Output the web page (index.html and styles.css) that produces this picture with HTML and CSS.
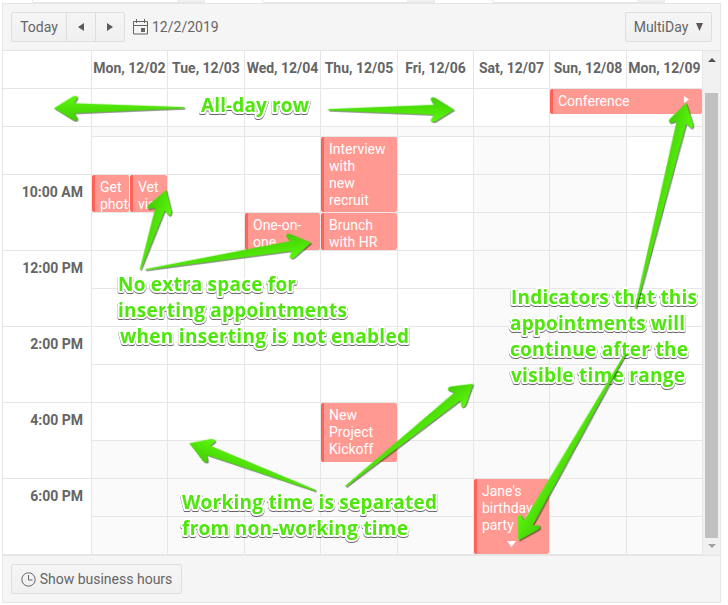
FILE: index.html
```html
<!DOCTYPE html>
<html lang="en">
<head>
<meta charset="utf-8">
<title>Scheduler</title>
<link rel="stylesheet" href="styles.css">
</head>
<body>
<div class="page">
  <div class="fields"><div class="field"></div><div class="field"></div><div class="field"></div></div>
  <div class="scheduler">
    <header class="toolbar">
      <div class="group">
        <button class="today">Today</button>
        <button class="nav"><svg width="6" height="8" viewBox="0 0 6 8"><path d="M6 0v8L0 4z"/></svg></button>
        <button class="nav"><svg width="6" height="8" viewBox="0 0 6 8"><path d="M0 0v8l6-4z"/></svg></button>
      </div>
      <svg class="calendar" width="15" height="16" viewBox="0 0 15 16"><path d="M.5 2.5h14v12.500h-14zM.5 6.500h14M3.500 0v4M11.500 0v4" fill="none" stroke="#656565"/><path d="M8 9h4v4H8z" fill="#656565"/></svg>
      <span class="date">12/2/2019</span>
      <button class="view">MultiDay <svg width="7" height="8" viewBox="0 0 7 8"><path d="M0 0h7L3.500 8z"/></svg></button>
    </header>
    <div class="content">
      <div class="table">
        <div class="row head"><div></div><div>Mon, 12/02</div><div>Tue, 12/03</div><div>Wed, 12/04</div><div>Thu, 12/05</div><div>Fri, 12/06</div><div>Sat, 12/07</div><div>Sun, 12/08</div><div>Mon, 12/09</div></div>
        <div class="row allday"><div></div><div></div><div></div><div></div><div></div><div></div><div></div>
          <div class="host"><div class="event conference">Conference<svg class="next" width="5" height="7" viewBox="0 0 5 7"><path d="M0 0v7l5-3.500z"/></svg></div></div><div></div></div>
        <div class="row body">
          <div class="times"><div></div><div>10:00 AM</div><div>12:00 PM</div><div>2:00 PM</div><div>4:00 PM</div><div>6:00 PM</div></div>
          <div class="day"><div class="event half s3">Get photo</div><div class="event half second s3">Vet visit</div></div>
          <div class="day"></div>
          <div class="day"><div class="event s4">One-on-one</div></div>
          <div class="day"><div class="event interview">Interview with<br>new recruit</div><div class="event s4">Brunch with HR</div><div class="event kickoff">New Project Kickoff</div></div>
          <div class="day"></div>
          <div class="day off"><div class="event party">Jane's birthday party<svg class="more" width="9" height="6" viewBox="0 0 9 6"><path d="M0 0h9L4.500 6z"/></svg></div></div>
          <div class="day off"></div>
          <div class="day"></div>
        </div>
      </div>
      <div class="scrollbar">
        <svg width="8" height="4" viewBox="0 0 8 4"><path d="M4 0l4 4H0z" fill="#505050"/></svg>
        <div class="thumb"></div>
        <svg width="8" height="4" viewBox="0 0 8 4"><path d="M0 0h8L4 4z" fill="#a0a0a0"/></svg>
      </div>
    </div>
    <footer class="footer">
      <button class="hours"><svg width="15" height="15" viewBox="0 0 15 15"><path d="M7.500 3v5h4" fill="none" stroke="#656565"/><circle cx="7.500" cy="7.500" r="6.700" fill="none" stroke="#656565"/></svg>Show business hours</button>
    </footer>
  </div>
  <svg class="notes" width="728" height="605" viewBox="0 0 728 605">
    <defs>
      <linearGradient id="green" x1="0" y1="0" x2="0" y2="1"><stop offset="0" stop-color="#5bf70c"/><stop offset="1" stop-color="#42cf05"/></linearGradient>
    </defs>
    <g class="labels">
      <text x="201" y="112" textLength="108">All-day row</text>
      <text x="118" y="291" textLength="178">No extra space for</text>
      <text x="118" y="317" textLength="229">inserting appointments</text>
      <text x="120" y="343" textLength="289">when inserting is not enabled</text>
      <text x="511" y="304" textLength="186">Indicators that this</text>
      <text x="510" y="330" textLength="175">appointments will</text>
      <text x="510" y="356" textLength="178">continue after the</text>
      <text x="511" y="382" textLength="174">visible time range</text>
      <text x="182" y="509" textLength="255">Working time is separated</text>
      <text x="182" y="535" textLength="226">from non-working time</text>
    </g>
    <g class="arrows" fill="url(#green)" transform="translate(-.7 -.3)">
      <path transform="translate(54.500 108.500) rotate(-.2)" d="M0 0L19-11.800Q22-13 23.500-11.500Q24-10 23-9L20.500-5L130.500-.7V.7L20.500 5L23 9Q24.500 11 23 12Q21 13 19 11.800z"/>
      <path transform="translate(455 110) rotate(180)" d="M0 0L19-11.800Q22-13 23.500-11.500Q24-10 23-9L20.500-5L126-.7V.7L20.500 5L23 9Q24.500 11 23 12Q21 13 19 11.800z"/>
      <path transform="translate(167 190) rotate(108)" d="M0 0L19-11.800Q22-13 23.500-11.500Q24-10 23-9L20.500-5L84-.7V.7L20.500 5L23 9Q24.500 11 23 12Q21 13 19 11.800z"/>
      <path transform="translate(312 243) rotate(170.800)" d="M0 0L19-11.800Q22-13 23.500-11.500Q24-10 23-9L20.500-5L168-.7V.7L20.500 5L23 9Q24.500 11 23 12Q21 13 19 11.800z"/>
      <path transform="translate(687 103) rotate(103.900)" d="M0 0L19-11.800Q22-13 23.500-11.500Q24-10 23-9L20.500-5L212-.7V.7L20.500 5L23 9Q24.500 11 23 12Q21 13 19 11.800z"/>
      <path transform="translate(519 541) rotate(-60.200)" d="M0 0L19-11.800Q22-13 23.500-11.500Q24-10 23-9L20.500-5L215.500-.7V.7L20.500 5L23 9Q24.500 11 23 12Q21 13 19 11.800z"/>
      <path transform="translate(190 443.500) rotate(20.600)" d="M0 0L19-11.800Q22-13 23.500-11.500Q24-10 23-9L20.500-5L135-.7V.7L20.500 5L23 9Q24.500 11 23 12Q21 13 19 11.800z"/>
      <path transform="translate(474 384) rotate(141.200)" d="M0 0L19-11.800Q22-13 23.500-11.500Q24-10 23-9L20.500-5L164-.7V.7L20.500 5L23 9Q24.500 11 23 12Q21 13 19 11.800z"/>
    </g>
  </svg>
</div>
</body>
</html>
```
FILE: styles.css
```css
* { box-sizing: border-box; }
body { margin: 0; background: #fff; color: #656565; font: 14px/17px Roboto, "Liberation Sans", sans-serif; }
.page { position: relative; width: 728px; height: 605px; overflow: hidden; }
.fields { display: flex; gap: 57px; height: 3px; padding-left: 32px; }
.field { width: 173px; height: 3px; border: 1px solid #e6e6e6; border-top: 0; border-radius: 0 0 2px 2px; background: linear-gradient(90deg, #fff 144px, #f0f0f0 144px); }
.scheduler { width: 719px; height: 600px; margin-left: 2px; border: 1px solid #e6e6e6; }
.toolbar { display: flex; align-items: center; height: 47px; padding: 0 8px; background: #f5f5f5; border-bottom: 1px solid #e6e6e6; }
button { display: flex; align-items: center; justify-content: center; height: 30px; margin: 0; padding: 0; border: 1px solid #dedede; border-radius: 2px; background: linear-gradient(#f5f5f5, #f0f0f0); color: #656565; font: inherit; }
button svg { fill: #5a5a5a; }
.group { display: flex; }
.today { width: 56px; border-radius: 2px 0 0 2px; }
.nav { width: 30px; margin-left: -1px; border-radius: 0; }
.nav:last-child { border-radius: 0 2px 2px 0; }
.calendar { margin-left: 8px; }
.date { margin-left: 4px; }
.view { width: 87px; margin-left: auto; gap: 8px; }
.content { display: flex; height: 504px; }
.table { width: 700px; }
.row { display: grid; grid-template-columns: 89px 76px 77px 76px 77px 76px 76px 77px 76px; }
.row > div { border-right: 1px solid #e6e6e6; min-width: 0; }
.head { height: 38px; }
.head > div { border-bottom: 1px solid #e6e6e6; padding-top: 9px; text-align: center; font-weight: 700; white-space: nowrap; }
.allday > div { height: 38px; border-bottom: 1px solid #e6e6e6; }
.body { height: 428px; }
.times { display: grid; grid-template-rows: 48px repeat(5, 76px); font-weight: 700; text-align: right; }
.times > div { border-bottom: 1px solid #e6e6e6; padding: 9px 8px 0 0; }
.day { display: grid; grid-template-columns: 38px 1fr; grid-template-rows: 10px repeat(11, 38px); background: repeating-linear-gradient(transparent 0 37px, #e6e6e6 37px 38px) 0 10px / 100% 418px no-repeat, linear-gradient(#e6e6e6, #e6e6e6) 0 9px / 100% 1px no-repeat, linear-gradient(#fafafa 9px, #fff 9px 314px, #fafafa 314px); }
.day.off { background: repeating-linear-gradient(transparent 0 37px, #e6e6e6 37px 38px) 0 10px / 100% 418px no-repeat, linear-gradient(#e6e6e6, #e6e6e6) 0 9px / 100% 1px no-repeat, #fafafa; }
.event { position: relative; grid-column: 1 / -1; margin-bottom: 1px; padding: 4px 4px 0 5px; border-left: 3px solid #ff6358; border-radius: 2px; background: #ff9992; color: #fff; overflow: hidden; }
.half { grid-column: 1; margin-right: 1px; }
.second { grid-column: 2; margin-right: 0; }
.s3 { grid-row: 3; }
.s4 { grid-row: 4; }
.interview { grid-row: 2 / 4; }
.kickoff { grid-row: 9 / 11; height: 59px; padding-right: 20px; }
.party { grid-row: 11 / 13; padding-right: 8px; }
.conference { width: 152px; height: 25px; z-index: 1; }
.next, .more { position: absolute; fill: #fff; }
.next { right: 13px; top: 7px; }
.more { left: 30px; bottom: 7px; }
.scrollbar { display: flex; flex-direction: column; align-items: center; width: 17px; padding: 7px 0 5px; background: #f1f1f1; }
.thumb { width: 13px; height: 445px; margin: 31px 2px 6px; background: #c1c1c1; }
.footer { display: flex; align-items: center; height: 47px; padding-left: 8px; border-top: 1px solid #e6e6e6; background: #f5f5f5; }
.hours { width: 171px; gap: 4px; }
.notes { position: absolute; left: 0; top: 0; z-index: 2; pointer-events: none; }
.labels { font: 700 19px "Open Sans", "Noto Sans", sans-serif; fill: #4fe60b; stroke: #fff; stroke-width: 4px; stroke-linejoin: round; paint-order: stroke; filter: drop-shadow(0 1px .6px rgba(0, 0, 0, .6)); }
.arrows { filter: drop-shadow(1px 1px .6px rgba(0, 0, 0, .5)); }
```
